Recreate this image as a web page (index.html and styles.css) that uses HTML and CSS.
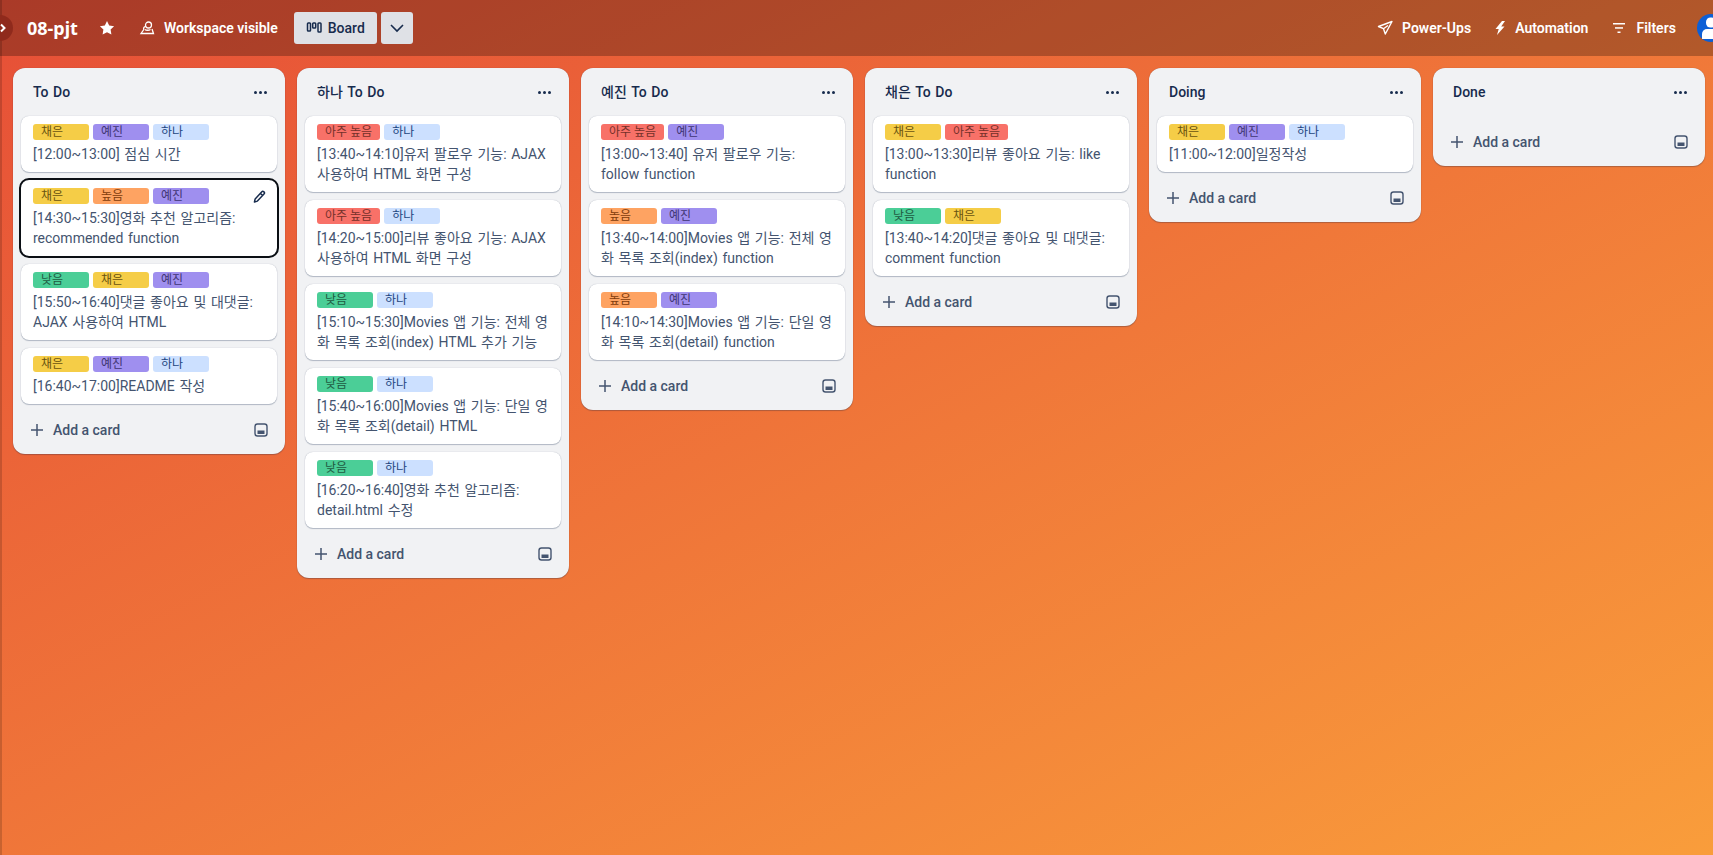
FILE: index.html
```html
<!DOCTYPE html>
<html lang="ko">
<head>
  <meta charset="UTF-8">
  <title>08-pjt</title>
  <link rel="stylesheet" href="styles.css">
</head>
<body>
  <div class="page">
    <div class="rail">
      <span class="rail-toggle">
        <svg width="10" height="10" viewBox="0 0 10 10"><path d="M3 1.500 6.500 5 3 8.500" fill="none" stroke="#fff" stroke-width="2"/></svg>
      </span>
    </div>

    <header class="board-bar">
      <div class="bar-group">
        <h1 class="board-name">08-pjt</h1>
        <button class="bar-btn star-btn">
          <svg width="16" height="16" viewBox="0 0 16 16"><path d="M8 1l2.200 4.500 4.900.7-3.500 3.400.8 4.900L8 12.200l-4.400 2.300.8-4.900L.9 6.200l4.900-.7z" fill="#fff"/></svg>
        </button>
        <button class="bar-btn visible-btn">
          <svg width="16" height="16" viewBox="0 0 16 16" fill="none" stroke="#fff" stroke-width="1.300"><circle cx="9.500" cy="5" r="3"/><path d="M6.800 6.300A2.300 2.300 0 0 0 4.800 9.500L2 13.500h12.500l-1.500-4.500"/><path d="M6 9.500c1 1 4 1 5.500 0"/></svg>
          <span>Workspace visible</span>
        </button>
        <button class="view-btn">
          <svg width="16" height="16" viewBox="0 0 16 16" fill="none" stroke="#172b4d" stroke-width="1.500"><rect x="1.500" y="3" width="3" height="8" rx=".8"/><rect x="6.700" y="3" width="3" height="5" rx=".8"/><rect x="12" y="3" width="3" height="9" rx=".8"/></svg>
          <span>Board</span>
        </button>
        <button class="view-btn more-views">
          <svg width="16" height="16" viewBox="0 0 16 16"><path d="M2 5l6 6 6-6" fill="none" stroke="#172b4d" stroke-width="1.600"/></svg>
        </button>
      </div>
      <div class="bar-group bar-right">
        <button class="bar-btn">
          <svg width="16" height="16" viewBox="0 0 16 16" fill="none" stroke="#fff" stroke-width="1.400" stroke-linejoin="round"><path d="M15 1.500 1.500 6.500l5 2.200 1.800 5.300zM6.500 8.700 11 5.500"/></svg>
          <span>Power-Ups</span>
        </button>
        <button class="bar-btn">
          <svg width="12" height="16" viewBox="0 0 12 16"><path d="M8 1 1.500 9h3.200L3 15l7.500-8.500H7.200L11 1z" fill="#fff"/></svg>
          <span>Automation</span>
        </button>
        <button class="bar-btn">
          <svg width="16" height="16" viewBox="0 0 16 16" fill="#fff"><rect x="2" y="3" width="12" height="1.500"/><rect x="4" y="7.200" width="8" height="1.500"/><rect x="6.500" y="11.500" width="3" height="1.500"/></svg>
          <span>Filters</span>
        </button>
        <span class="bar-divider"></span>
        <span class="avatar">
          <svg width="28" height="28" viewBox="0 0 28 28" fill="#fff"><rect x="9" y="3.500" width="10" height="10" rx="4.500"/><path d="M5 25v-5a5 5 0 0 1 5-5h8a5 5 0 0 1 5 5v5z"/></svg>
        </span>
      </div>
    </header>

    <main class="board">
      <section class="list">
        <div class="list-head"><h2>To Do</h2><span class="dots"><i></i><i></i><i></i></span></div>
        <div class="cards">
          <article class="card">
            <div class="labels"><span class="label yellow">채은</span><span class="label purple">예진</span><span class="label blue">하나</span></div>
            <p>[12:00~13:00] 점심 시간</p>
          </article>
          <article class="card active">
            <div class="labels"><span class="label yellow">채은</span><span class="label orange">높음</span><span class="label purple">예진</span></div>
            <p>[14:30~15:30]영화 추천 알고리즘: recommended function</p>
            <svg class="pencil" width="14" height="14" viewBox="0 0 16 16" fill="none" stroke="#172b4d" stroke-width="1.700" stroke-linejoin="round"><path d="M11 2.200a1.800 1.800 0 0 1 2.700 2.500l-7.500 8-3.400 1 .8-3.500zM9.500 3.800l2.700 2.600"/></svg>
          </article>
          <article class="card">
            <div class="labels"><span class="label green">낮음</span><span class="label yellow">채은</span><span class="label purple">예진</span></div>
            <p>[15:50~16:40]댓글 좋아요 및 대댓글: AJAX 사용하여 HTML</p>
          </article>
          <article class="card">
            <div class="labels"><span class="label yellow">채은</span><span class="label purple">예진</span><span class="label blue">하나</span></div>
            <p>[16:40~17:00]README 작성</p>
          </article>
        </div>
        <div class="list-foot">
          <button class="add-card"><svg width="16" height="16" viewBox="0 0 16 16"><path d="M8 2v12M2 8h12" stroke="#44546f" stroke-width="1.500"/></svg><span>Add a card</span></button>
          <svg class="template" width="16" height="16" viewBox="0 0 16 16" fill="none" stroke="#44546f" stroke-width="1.400"><rect x="2" y="2" width="12" height="12" rx="2.500"/><rect x="4.500" y="8.500" width="7" height="3.500" fill="#44546f" stroke="none"/></svg>
        </div>
      </section>

      <section class="list">
        <div class="list-head"><h2>하나 To Do</h2><span class="dots"><i></i><i></i><i></i></span></div>
        <div class="cards">
          <article class="card">
            <div class="labels"><span class="label red">아주 높음</span><span class="label blue">하나</span></div>
            <p>[13:40~14:10]유저 팔로우 기능: AJAX 사용하여 HTML 화면 구성</p>
          </article>
          <article class="card">
            <div class="labels"><span class="label red">아주 높음</span><span class="label blue">하나</span></div>
            <p>[14:20~15:00]리뷰 좋아요 기능: AJAX 사용하여 HTML 화면 구성</p>
          </article>
          <article class="card">
            <div class="labels"><span class="label green">낮음</span><span class="label blue">하나</span></div>
            <p>[15:10~15:30]Movies 앱 기능: 전체 영화 목록 조회(index) HTML 추가 기능</p>
          </article>
          <article class="card">
            <div class="labels"><span class="label green">낮음</span><span class="label blue">하나</span></div>
            <p>[15:40~16:00]Movies 앱 기능: 단일 영화 목록 조회(detail) HTML</p>
          </article>
          <article class="card">
            <div class="labels"><span class="label green">낮음</span><span class="label blue">하나</span></div>
            <p>[16:20~16:40]영화 추천 알고리즘: detail.html 수정</p>
          </article>
        </div>
        <div class="list-foot">
          <button class="add-card"><svg width="16" height="16" viewBox="0 0 16 16"><path d="M8 2v12M2 8h12" stroke="#44546f" stroke-width="1.500"/></svg><span>Add a card</span></button>
          <svg class="template" width="16" height="16" viewBox="0 0 16 16" fill="none" stroke="#44546f" stroke-width="1.400"><rect x="2" y="2" width="12" height="12" rx="2.500"/><rect x="4.500" y="8.500" width="7" height="3.500" fill="#44546f" stroke="none"/></svg>
        </div>
      </section>

      <section class="list">
        <div class="list-head"><h2>예진 To Do</h2><span class="dots"><i></i><i></i><i></i></span></div>
        <div class="cards">
          <article class="card">
            <div class="labels"><span class="label red">아주 높음</span><span class="label purple">예진</span></div>
            <p>[13:00~13:40] 유저 팔로우 기능: follow function</p>
          </article>
          <article class="card">
            <div class="labels"><span class="label orange">높음</span><span class="label purple">예진</span></div>
            <p>[13:40~14:00]Movies 앱 기능: 전체 영화 목록 조회(index) function</p>
          </article>
          <article class="card">
            <div class="labels"><span class="label orange">높음</span><span class="label purple">예진</span></div>
            <p>[14:10~14:30]Movies 앱 기능: 단일 영화 목록 조회(detail) function</p>
          </article>
        </div>
        <div class="list-foot">
          <button class="add-card"><svg width="16" height="16" viewBox="0 0 16 16"><path d="M8 2v12M2 8h12" stroke="#44546f" stroke-width="1.500"/></svg><span>Add a card</span></button>
          <svg class="template" width="16" height="16" viewBox="0 0 16 16" fill="none" stroke="#44546f" stroke-width="1.400"><rect x="2" y="2" width="12" height="12" rx="2.500"/><rect x="4.500" y="8.500" width="7" height="3.500" fill="#44546f" stroke="none"/></svg>
        </div>
      </section>

      <section class="list">
        <div class="list-head"><h2>채은 To Do</h2><span class="dots"><i></i><i></i><i></i></span></div>
        <div class="cards">
          <article class="card">
            <div class="labels"><span class="label yellow">채은</span><span class="label red">아주 높음</span></div>
            <p>[13:00~13:30]리뷰 좋아요 기능: like function</p>
          </article>
          <article class="card">
            <div class="labels"><span class="label green">낮음</span><span class="label yellow">채은</span></div>
            <p>[13:40~14:20]댓글 좋아요 및 대댓글: comment function</p>
          </article>
        </div>
        <div class="list-foot">
          <button class="add-card"><svg width="16" height="16" viewBox="0 0 16 16"><path d="M8 2v12M2 8h12" stroke="#44546f" stroke-width="1.500"/></svg><span>Add a card</span></button>
          <svg class="template" width="16" height="16" viewBox="0 0 16 16" fill="none" stroke="#44546f" stroke-width="1.400"><rect x="2" y="2" width="12" height="12" rx="2.500"/><rect x="4.500" y="8.500" width="7" height="3.500" fill="#44546f" stroke="none"/></svg>
        </div>
      </section>

      <section class="list">
        <div class="list-head"><h2>Doing</h2><span class="dots"><i></i><i></i><i></i></span></div>
        <div class="cards">
          <article class="card">
            <div class="labels"><span class="label yellow">채은</span><span class="label purple">예진</span><span class="label blue">하나</span></div>
            <p>[11:00~12:00]일정작성</p>
          </article>
        </div>
        <div class="list-foot">
          <button class="add-card"><svg width="16" height="16" viewBox="0 0 16 16"><path d="M8 2v12M2 8h12" stroke="#44546f" stroke-width="1.500"/></svg><span>Add a card</span></button>
          <svg class="template" width="16" height="16" viewBox="0 0 16 16" fill="none" stroke="#44546f" stroke-width="1.400"><rect x="2" y="2" width="12" height="12" rx="2.500"/><rect x="4.500" y="8.500" width="7" height="3.500" fill="#44546f" stroke="none"/></svg>
        </div>
      </section>

      <section class="list">
        <div class="list-head"><h2>Done</h2><span class="dots"><i></i><i></i><i></i></span></div>
        <div class="list-foot">
          <button class="add-card"><svg width="16" height="16" viewBox="0 0 16 16"><path d="M8 2v12M2 8h12" stroke="#44546f" stroke-width="1.500"/></svg><span>Add a card</span></button>
          <svg class="template" width="16" height="16" viewBox="0 0 16 16" fill="none" stroke="#44546f" stroke-width="1.400"><rect x="2" y="2" width="12" height="12" rx="2.500"/><rect x="4.500" y="8.500" width="7" height="3.500" fill="#44546f" stroke="none"/></svg>
        </div>
      </section>
    </main>
  </div>
</body>
</html>
```

FILE: styles.css
```css
* {
  box-sizing: border-box;
}
html, body {
  height: 100%;
}
body {
  margin: 0;
  overflow: hidden;
  font-family: Roboto, "Noto Sans CJK KR", sans-serif;
  font-size: 14px;
  color: #172b4d;
  background: linear-gradient(to bottom right, #e64f37, #f99d3b);
}
button {
  font: inherit;
  border: none;
  background: none;
  padding: 0;
  display: flex;
  align-items: center;
  white-space: nowrap;
}
h1, h2, p {
  margin: 0;
}
.page {
  position: relative;
  height: 100%;
}
.rail {
  position: absolute;
  top: 0;
  left: 0;
  bottom: 0;
  width: 2px;
  background: rgba(0, 0, 0, 0.16);
}
.rail-toggle {
  position: absolute;
  top: 15px;
  left: -13px;
  width: 26px;
  height: 26px;
  border-radius: 50%;
  background: #8f2a1c;
  display: flex;
  align-items: center;
  justify-content: flex-end;
  padding-right: 5px;
}
.board-bar {
  height: 56px;
  padding-left: 27px;
  display: flex;
  justify-content: space-between;
  align-items: center;
  background: rgba(0, 0, 0, 0.26);
  color: #fff;
}
.bar-group {
  display: flex;
  align-items: center;
}
.bar-right {
  flex: none;
  width: 336px;
}
.board-name {
  font-family: "Noto Sans", sans-serif;
  font-size: 18px;
  font-weight: 700;
  margin-right: 21px;
}
.bar-btn {
  color: #fff;
  font-weight: 600;
  gap: 9px;
}
.star-btn {
  margin-right: 24px;
}
.visible-btn {
  margin-right: 16px;
}
.view-btn {
  height: 32px;
  padding: 0 12px;
  gap: 6px;
  border-radius: 3px;
  background: #dfe1e6;
  color: #172b4d;
  font-weight: 500;
}
.more-views {
  width: 32px;
  padding: 0 8px;
  margin-left: 4px;
}
.bar-right .bar-btn {
  margin-right: 23px;
}
.bar-divider {
  width: 1px;
  height: 16px;
  background: rgba(255, 255, 255, 0.2);
  margin: 0 7px 0 -9px;
}
.avatar {
  flex: none;
  width: 28px;
  height: 28px;
  border-radius: 50%;
  background: #0c5fd6;
  overflow: hidden;
}
.board {
  display: flex;
  align-items: flex-start;
  gap: 12px;
  padding: 12px 13px;
}
.list {
  flex: none;
  width: 272px;
  background: #f1f2f4;
  border-radius: 12px;
  box-shadow: 0 1px 1px rgba(9, 30, 66, 0.25), 0 0 1px rgba(9, 30, 66, 0.31);
}
.list-head {
  height: 48px;
  padding: 0 18px 0 20px;
  display: flex;
  align-items: center;
  justify-content: space-between;
  word-spacing: 1px;
}
.list-head h2 {
  font-size: 14px;
  font-weight: 500;
  line-height: 20px;
}
.dots {
  display: flex;
  gap: 2px;
}
.dots i {
  width: 3px;
  height: 3px;
  border-radius: 50%;
  background: #172b4d;
}
.cards {
  display: flex;
  flex-direction: column;
  gap: 8px;
  padding: 0 8px;
}
.card {
  position: relative;
  background: #fff;
  border-radius: 8px;
  padding: 8px 12px;
  box-shadow: 0 1px 1px rgba(9, 30, 66, 0.25), 0 0 1px rgba(9, 30, 66, 0.31);
  line-height: 20px;
  color: #44546f;
  word-spacing: 1.200px;
}
.card.active {
  outline: 2px solid #0b0f14;
}
.pencil {
  position: absolute;
  top: 10px;
  right: 11px;
}
.labels {
  display: flex;
  gap: 4px;
  margin-bottom: 4px;
}
.label {
  min-width: 56px;
  height: 16px;
  padding: 0 8px;
  border-radius: 3px;
  font-size: 12px;
  line-height: 16px;
  word-spacing: 0;
}
.yellow { background: #f5cd47; color: #6a5410; }
.purple { background: #9f8fef; color: #3f3673; }
.blue { background: #cce0ff; color: #1d4680; }
.orange { background: #fea362; color: #7f3c0c; }
.green { background: #4bce97; color: #1f5b42; }
.red { background: #f87168; color: #74302a; }
.list-foot {
  height: 50px;
  padding: 2px 16px 0 16px;
  display: flex;
  align-items: center;
  justify-content: space-between;
}
.add-card {
  gap: 8px;
  color: #44546f;
  font-weight: 500;
}
.template {
  flex: none;
}
```
